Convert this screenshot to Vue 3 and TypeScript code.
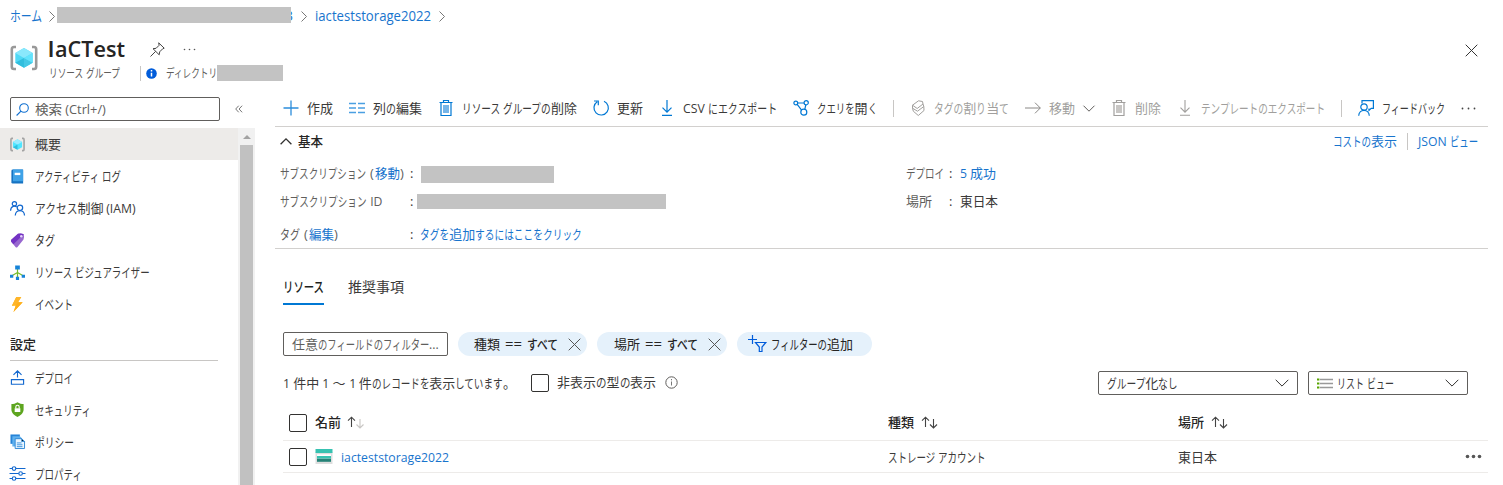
<script setup lang="ts">
import { defineComponent, h, onMounted, ref } from 'vue'

// Label set to a given width: kana are condensed, as in a UI typeface, while kanji keep their full width.
const Txt = defineComponent({
  props: { s: { type: String, required: true }, w: { type: Number, required: true } },
  setup(props) {
    const root = ref<HTMLElement | null>(null)
    const runs = props.s.match(/[\u3040-\u30ff]+|[\u0020-\u007e]+|[^\u0020-\u007e\u3040-\u30ff]+/g) || []
    const sizes = ref<{ w: number; k: number }[]>([])
    const isKana = (t: string) => /[\u3040-\u30ff]/.test(t)
    const isLatin = (t: string) => /^[\u0020-\u007e]+$/.test(t)
    onMounted(() => {
      const els = Array.from(root.value!.querySelectorAll('.txt-in')) as HTMLElement[]
      const nat = els.map((e) => e.getBoundingClientRect().width)
      let kana = 0
      let rest = 0
      runs.forEach((r, i) => {
        if (isKana(r)) kana += nat[i]
        else rest += nat[i] * (isLatin(r) ? 0.94 : 1)
      })
      sizes.value = runs.map((r, i) => {
        const base = isLatin(r) ? 0.94 : 1
        const k = kana === 0 ? (base * props.w) / rest : isKana(r) ? (props.w - rest) / kana : base
        return { w: nat[i] * k, k }
      })
    })
    return () =>
      h('span', { class: 'txt', ref: root, style: { width: props.w + 'px' } },
        runs.map((r, i) => {
          const z = sizes.value[i]
          return h('span', { class: 'txt-run', style: z ? { width: z.w + 'px' } : {} }, [
            h('span', { class: 'txt-in', style: z ? { transform: `scaleX(${z.k})` } : {} }, r),
          ])
        }))
  },
})

const paths: Record<string, string> = {
  plus: '<path d="M8 .5v15M.5 8h15" stroke="#2b8ddb" stroke-width="1.300" fill="none"/>',
  columns: '<path d="M0 3.500h7M0 8h7M0 12.500h7M9 3.500h7M9 8h7M9 12.500h7" stroke="#4a9fe2" stroke-width="1.500"/>',
  trash: '<path d="M1.500 2.500h13M5.500 2.500V.5h5v2M3 2.500v13h10v-13" stroke="#0078d4" stroke-width="1.200" fill="none"/><path d="M5 5h6v8H5z" fill="#76b5e8"/>',
  trashOff: '<path d="M1.500 2.500h13M5.500 2.500V.5h5v2M3 2.500v13h10v-13" stroke="#a19f9d" stroke-width="1.200" fill="none"/><path d="M5 5h6v8H5z" fill="#c8c6c4"/>',
  refresh: '<path d="M11 1.200A7.200 7.200 0 1 1 4.200 1.800M1 1h4.300v4.300" stroke="#0078d4" stroke-width="1.200" fill="none"/>',
  down: '<path d="M8 0v12M3.500 7.700 8 12.200l4.500-4.500M3 15.300h10" stroke="#0078d4" stroke-width="1.200" fill="none"/>',
  downOff: '<path d="M8 0v12M3.500 7.700 8 12.200l4.500-4.500M3 15.300h10" stroke="#a19f9d" stroke-width="1.100" fill="none"/>',
  query: '<g stroke="#0078d4" stroke-width="1.200" fill="none"><circle cx="2.800" cy="3" r="1.900"/><circle cx="13.200" cy="2.700" r="2.100"/><circle cx="10.800" cy="12.200" r="3"/><path d="M4.700 3h6.400M4.200 4.400l4.400 5.700M12.800 4.800l-1 4.500"/></g>',
  tagOff: '<path d="M2.500 5.200 8.500.8l4 .7.500 2.500-5.800 4.500zM2.500 5.200v3l5 3 6.300-4.700L13 4M2.500 8.200l.8 3 5 4.300 5.700-5-.2-4" stroke="#a19f9d" fill="none"/>',
  arrowOff: '<path d="M0 8h15.300M10 2.700 15.300 8 10 13.300" stroke="#8a8886" fill="none"/>',
  feedback: '<g stroke="#0078d4" stroke-width="1.200" fill="none"><path d="M4 3.500V.6h11.400v7.800h-2.200l-2.200 2V8.400"/><circle cx="6" cy="7" r="3.200"/><path d="M.7 15.700c.3-7.200 10.300-7.200 10.600 0"/></g>',
  book: '<path d="M1.500 2Q1.500.6 3 .6h11v14.800H3q-1.500 0-1.500-1.400z" fill="#1673c2"/><path d="M3.200.6H13q1 0 1 1V13H3.200z" fill="#3fa2e7"/><path d="M5 4h6v2.500H5z" fill="#fff"/>',
  people: '<g stroke="#1268cf" stroke-width="1.300" fill="none"><circle cx="4.700" cy="3" r="2.300"/><circle cx="10.600" cy="7.300" r="2.900"/><path d="M.6 10.500c.2-5.500 5-5.700 6.600-4M5.600 15.500c.5-6.800 9.500-6.800 9.900 0"/></g>',
  tag: '<path d="M1.300 7.300 8.500.9q3.200-.9 6.200.4.700 2.700-.3 5.700L7.800 15.200q-.9.700-1.700 0L1.300 9.200q-.6-1 0-1.900z" fill="#9868cf"/><path d="M1.300 7.300 8.500.9q3.200-.9 6.200.4L3.600 12 1.300 9.200q-.6-1 0-1.900z" fill="#7433c4"/><circle cx="12" cy="3.500" r="1.300" fill="#e5d5fa"/>',
  tree: '<path d="M8 4v10M8 8 2 11.500M8 8l6 3.500" stroke="#76bc2d" stroke-width="1.300"/><path d="M5.500.5h5v4.200h-5zM0 10.300h3.500v3.200H0zM12.500 10.300H16v3.200h-3.500zM6.300 12.500h3.400V16H6.300z" fill="#1683d8"/>',
  bolt: '<path d="M6.700 0H12L8.600 5.700h4.900L3.700 16l2.400-6.800H2z" fill="#fdb515"/><path d="M8.600 5.700h4.900L3.700 16l2.400-6.800z" fill="#ffae1b"/><path d="M6.700 0H12L7 8 2 9.200z" fill="#ffb52a"/>',
  deploy: '<g stroke="#1268cf" stroke-width="1.200" fill="none"><path d="M8 8V1M3.700 5.200 8 .9l4.300 4.300M1.500 10.200h13v5h-13z"/></g>',
  shield: '<path d="M8 .3c2 1.500 4.500 1.800 6.500 1.900v6c0 4-4.500 6.600-6.500 7.700-2-1.100-6.500-3.700-6.500-7.700v-6c2-.1 4.500-.4 6.500-1.900z" fill="#5da51f"/><path d="M6.200 7V5.200q0-1.800 1.800-1.800t1.800 1.800V7" stroke="#fff" stroke-width="1.200" fill="none"/><path d="M5 6.700h6v4H5z" fill="#fff"/>',
  policy: '<path d="M.5.500h10v10h-10z" fill="#2583d8"/><path d="M2.500 2.300h8l2 2v9h-10z" fill="#60b1ee"/><path d="M5.500 5h7l3 3v7.500h-10z" fill="#eaf6ff" stroke="#2e86d5"/><path d="M12.500 5v3h3zM7.300 9.500h5M7.300 11.500h6M7.300 13.500h6" stroke="#3a91dc"/>',
  sliders: '<g stroke="#1268cf" stroke-width="1.200" fill="#fff"><path d="M-.5 2.700h17M-.5 8h17M-.5 13.300h17"/><circle cx="4.300" cy="2.700" r="1.900"/><circle cx="11.300" cy="8" r="1.900"/><circle cx="4.300" cy="13.300" r="1.900"/></g>',
  group: '<path d="M3.200 1.500H2Q1 1.500 1 3v10q0 1.500 1 1.500h1.200M12.800 1.500H14q1 0 1 1.500v10q0 1.500-1 1.500h-1.200" stroke="#a3a3a3" stroke-width="1.700" fill="none"/><path d="m8 2.400 4.900 2.800v5.600L8 13.600l-4.900-2.800V5.200z" fill="#50e6ff"/><path d="m8 2.400 4.900 2.800L8 8 3.100 5.200z" fill="#9cebff"/><path d="M8 8v5.600l-4.900-2.800z" fill="#32bedd"/>',
}

interface Entry { icon: string; s: string; w: number }
const nav: Entry[] = [
  { icon: 'group', s: '概要', w: 26 },
  { icon: 'book', s: 'アクティビティ ログ', w: 86 },
  { icon: 'people', s: 'アクセス制御 (IAM)', w: 101 },
  { icon: 'tag', s: 'タグ', w: 20 },
  { icon: 'tree', s: 'リソース ビジュアライザー', w: 115 },
  { icon: 'bolt', s: 'イベント', w: 38 },
]
const settings: Entry[] = [
  { icon: 'deploy', s: 'デプロイ', w: 38 },
  { icon: 'shield', s: 'セキュリティ', w: 56 },
  { icon: 'policy', s: 'ポリシー', w: 39 },
  { icon: 'sliders', s: 'プロパティ', w: 47 },
]
const commands: Entry[] = [
  { icon: 'plus', s: '作成', w: 26 },
  { icon: 'columns', s: '列の編集', w: 49 },
  { icon: 'trash', s: 'リソース グループの削除', w: 115 },
  { icon: 'refresh', s: '更新', w: 26 },
  { icon: 'down', s: 'CSV にエクスポート', w: 94 },
  { icon: 'query', s: 'クエリを開く', w: 60 },
]
</script>

<template>
  <div class="page">
    <nav class="crumbs">
      <Txt class="link" s="ホーム" :w="32" />
      <svg class="sep first" width="6" height="11" viewBox="0 0 6 11"><path d="m.5.500 5 5-5 5" /></svg>
      <span class="mask crumb-mask"></span><span class="link tail">3</span>
      <svg class="sep second" width="6" height="11" viewBox="0 0 6 11"><path d="m.5.500 5 5-5 5" /></svg>
      <Txt class="link" s="iacteststorage2022" :w="116" />
      <svg class="sep third" width="6" height="11" viewBox="0 0 6 11"><path d="m.5.500 5 5-5 5" /></svg>
    </nav>

    <header class="head">
      <svg class="logo" width="28" height="28" viewBox="0 0 28 28">
        <path d="M6 3H4Q1.800 3 1.800 5.200v17.600Q1.800 25 4 25h2M22 3h2q2.200 0 2.200 2.200v17.600Q26.200 25 24 25h-2" fill="none" stroke="#999" stroke-width="2.600" />
        <path d="m14 4 8.700 4.900v9.900L14 23.700l-8.700-4.900V8.900z" fill="#50d9f5" />
        <path d="m14 4 8.700 4.900L14 13.900 5.300 8.900z" fill="#8ae8fc" />
        <path d="M14 13.900v9.800l-8.700-4.900z" fill="#32bedd" />
        <path d="M14 13.900v9.800l8.700-4.900z" fill="#45c8e5" />
        <path d="m14 13.900 8.700-5v9.900z" fill="#63e3fc" />
      </svg>
      <div class="titles">
        <div class="title-row">
          <h1 class="title"><span class="initial">I</span><Txt s="aCTest" :w="70" /></h1>
          <svg class="pin" width="15" height="15" viewBox="0 0 15 15"><path d="m8.700.800 5.500 5.400-1.500.6-3 3-.5 3L3 6.700l3.100-.4 3-3zM5.700 9.300.5 14.500" fill="none" stroke="#444" /></svg>
          <svg class="dots" width="13" height="3" viewBox="0 0 13 3"><g fill="#555"><circle cx="1.500" cy="1.500" r=".8" /><circle cx="6.500" cy="1.500" r=".8" /><circle cx="11.500" cy="1.500" r=".8" /></g></svg>
        </div>
        <div class="sub-row">
          <Txt class="sub" s="リソース グループ" :w="71" />
          <i class="sub-line"></i>
          <svg class="info" width="11" height="11" viewBox="0 0 11 11"><circle cx="5.500" cy="5.500" r="5.300" fill="#015cda" /><path d="M5.500 4.700v3.800M5.500 2v1.500" stroke="#fff" stroke-width="1.500" /></svg>
          <Txt class="sub" s="ディレクトリ" :w="51" />
          <span class="mask sub-mask"></span>
        </div>
      </div>
      <svg class="close" width="13" height="13" viewBox="0 0 13 13"><path d="m.7.700 11.600 11.600M12.300.700.7 12.300" stroke="#333" /></svg>
    </header>

    <div class="body">
      <aside class="side">
        <div class="search-row">
          <div class="search">
            <svg width="13" height="13" viewBox="0 0 13 13"><g fill="none" stroke="#0f6fd0" stroke-width="1.100"><circle cx="8" cy="5" r="4.300" /><path d="M5 8.200.6 12.500" /></g></svg>
            <Txt s="検索 (Ctrl+/)" :w="71" />
          </div>
          <svg class="fold" width="8" height="8" viewBox="0 0 9 9"><path d="M4.200.8.8 4.500l3.400 3.700M8 .8 4.600 4.500 8 8.200" fill="none" stroke="#666" /></svg>
        </div>
        <div class="side-main">
          <div class="menu">
            <div v-for="(n, i) in nav" :key="n.s" class="item" :class="{ on: i === 0 }">
              <svg width="15" height="15" viewBox="0 0 16 16" v-html="paths[n.icon]"></svg><Txt :s="n.s" :w="n.w" />
            </div>
            <div class="group-title"><Txt class="medium" s="設定" :w="26" /></div>
            <div v-for="n in settings" :key="n.s" class="item lower">
              <svg width="15" height="15" viewBox="0 0 16 16" v-html="paths[n.icon]"></svg><Txt :s="n.s" :w="n.w" />
            </div>
          </div>
          <div class="scroll"><i class="up"></i><i class="thumb"></i></div>
        </div>
      </aside>

      <main class="main">
        <div class="toolbar">
          <div v-for="c in commands" :key="c.s" class="cmd">
            <svg width="16" height="16" viewBox="0 0 16 16" v-html="paths[c.icon]"></svg><Txt :s="c.s" :w="c.w" />
          </div>
          <i class="bar"></i>
          <div class="cmd off"><svg width="16" height="16" viewBox="0 0 16 16" v-html="paths.tagOff"></svg><Txt s="タグの割り当て" :w="75" /></div>
          <div class="cmd off"><svg width="16" height="16" viewBox="0 0 16 16" v-html="paths.arrowOff"></svg><Txt s="移動" :w="26" />
            <svg width="12" height="7" viewBox="0 0 12 7"><path d="m.5.700 5.500 5.500L11.500.700" fill="none" stroke="#605e5c" /></svg></div>
          <div class="cmd off"><svg width="16" height="16" viewBox="0 0 16 16" v-html="paths.trashOff"></svg><Txt s="削除" :w="26" /></div>
          <div class="cmd off"><svg width="16" height="16" viewBox="0 0 16 16" v-html="paths.downOff"></svg><Txt s="テンプレートのエクスポート" :w="124" /></div>
          <i class="bar"></i>
          <div class="cmd"><svg width="16" height="16" viewBox="0 0 16 16" v-html="paths.feedback"></svg><Txt s="フィードバック" :w="63" /></div>
          <svg width="15" height="3" viewBox="0 0 15 3"><g fill="#444"><circle cx="1.500" cy="1.500" r=".9" /><circle cx="7.500" cy="1.500" r=".9" /><circle cx="13.500" cy="1.500" r=".9" /></g></svg>
        </div>

        <section class="essentials">
          <div class="ess-head">
            <svg width="12" height="7" viewBox="0 0 12 7"><path d="M.6 6.300 6 .9l5.400 5.400" fill="none" stroke="#323130" stroke-width="1.300" /></svg>
            <Txt class="medium" s="基本" :w="25" />
            <div class="views"><Txt s="コストの表示" :w="64" /><i></i><Txt s="JSON ビュー" :w="60" /></div>
          </div>
          <div class="ess-grid">
            <div class="row r1">
              <span class="key"><Txt s="サブスクリプション" :w="86" /><span class="paren">(</span><Txt class="link" s="移動" :w="25" /><span class="paren">)</span></span>
              <span class="colon">:</span><span class="mask m1"></span>
            </div>
            <div class="row r1"><span class="key"><Txt s="デプロイ" :w="38" /></span><span class="colon">:</span><Txt class="link val" s="5 成功" :w="36" /></div>
            <div class="row r2"><span class="key"><Txt s="サブスクリプション ID" :w="102" /></span><span class="colon">:</span><span class="mask m2"></span></div>
            <div class="row r2"><span class="key"><Txt s="場所" :w="26" /></span><span class="colon">:</span><Txt class="val" s="東日本" :w="38" /></div>
            <div class="row r3">
              <span class="key"><Txt s="タグ" :w="20" /><span class="paren">(</span><Txt class="link" s="編集" :w="25" /><span class="paren">)</span></span>
              <span class="colon">:</span><Txt class="link val" s="タグを追加するにはここをクリック" :w="162" />
            </div>
          </div>
        </section>

        <section class="resources">
          <div class="tabs">
            <div class="tab on"><Txt s="リソース" :w="41" /></div>
            <div class="tab"><Txt s="推奨事項" :w="56" /></div>
          </div>
          <div class="filters">
            <div class="field"><Txt s="任意のフィールドのフィルター..." :w="147" /></div>
            <div class="pill p1"><Txt s="種類" :w="26" /><Txt class="eq" s="==" :w="17" /><Txt class="medium" s="すべて" :w="31" />
              <svg width="13" height="13" viewBox="0 0 13 13"><path d="m.7.700 11.600 11.600M12.300.700.7 12.300" stroke="#555" /></svg></div>
            <div class="pill p2"><Txt s="場所" :w="26" /><Txt class="eq" s="==" :w="17" /><Txt class="medium" s="すべて" :w="31" />
              <svg width="13" height="13" viewBox="0 0 13 13"><path d="m.7.700 11.600 11.600M12.300.700.7 12.300" stroke="#555" /></svg></div>
            <div class="pill p3">
              <svg width="19" height="18" viewBox="0 0 19 18"><path d="M4.500 0v9M0 4.500h9M7.500 7.500h10.300L14 12v4.500h-2.700V12z" fill="none" stroke="#015cda" stroke-width="1.200" /></svg>
              <Txt s="フィルターの追加" :w="82" /></div>
          </div>
          <div class="status">
            <Txt class="count" s="1 件中 1 ～ 1 件のレコードを表示しています。" :w="233" />
            <span class="check"></span>
            <Txt class="hidden-label" s="非表示の型の表示" :w="99" />
            <svg class="hint" width="13" height="13" viewBox="0 0 13 13"><circle cx="6.500" cy="6.500" r="5.700" fill="none" stroke="#605e5c" /><path d="M6.500 5.500v4M6.500 3v1.300" stroke="#777" /></svg>
            <div class="select s1"><Txt s="グループ化なし" :w="71" />
              <svg width="14" height="8" viewBox="0 0 14 8"><path d="m.7.800 6.300 6.300L13.300.8" fill="none" stroke="#323130" /></svg></div>
            <div class="select s2">
              <svg width="16" height="11" viewBox="0 0 16 11"><path d="M3 1.500h13M3 5.500h13M3 9.500h13" stroke="#999" stroke-width="1.400" /><path d="M0 1.500h2.400M0 5.500h2.400M0 9.500h2.400" stroke="#57a300" stroke-width="2.200" /></svg>
              <Txt s="リスト ビュー" :w="57" />
              <svg class="caret" width="14" height="8" viewBox="0 0 14 8"><path d="m.7.800 6.300 6.300L13.300.8" fill="none" stroke="#323130" /></svg></div>
          </div>
          <div class="table">
            <div class="tr th">
              <div class="cell name"><span class="check"></span><Txt class="medium" s="名前" :w="26" />
                <svg width="18" height="13" viewBox="0 0 18 13"><path d="M4.500 11V1.200M1 4.700l3.500-3.500L8 4.700" fill="none" stroke="#444" stroke-width="1.100" /><path d="M13 3v9M9.500 8.500 13 12l3.500-3.500" fill="none" stroke="#c8c6c4" stroke-width="1.100" /></svg></div>
              <div class="cell kind"><Txt class="medium" s="種類" :w="26" />
                <svg width="18" height="13" viewBox="0 0 18 13"><path d="M4.500 11V1.200M1 4.700l3.500-3.500L8 4.700M12.500 3v9M9 8.500l3.500 3.500L16 8.500" fill="none" stroke="#444" stroke-width="1.100" /></svg></div>
              <div class="cell place"><Txt class="medium" s="場所" :w="26" />
                <svg width="18" height="13" viewBox="0 0 18 13"><path d="M4.500 11V1.200M1 4.700l3.500-3.500L8 4.700M12.500 3v9M9 8.500l3.500 3.500L16 8.500" fill="none" stroke="#444" stroke-width="1.100" /></svg></div>
            </div>
            <div class="tr">
              <div class="cell name"><span class="check"></span>
                <svg class="storage" width="18" height="15" viewBox="0 0 18 15"><path d="M.5 3h17v12H.5z" fill="#dedede" /><path d="M.5 0h17v4H.5z" fill="#37c2b1" /><path d="M2 5.300h14v3.500H2z" fill="#fff" /><path d="M2 7h14v2.600H2z" fill="#37c2b1" /><path d="M2 9.800h14v3H2z" fill="#258277" /></svg>
                <Txt class="link" s="iacteststorage2022" :w="108" /></div>
              <div class="cell kind"><Txt s="ストレージ アカウント" :w="98" /></div>
              <div class="cell place"><Txt s="東日本" :w="39" /></div>
              <svg class="more" width="17" height="5" viewBox="0 0 17 5"><g fill="#555"><circle cx="2.500" cy="2.500" r="1.800" /><circle cx="8.500" cy="2.500" r="1.800" /><circle cx="14.500" cy="2.500" r="1.800" /></g></svg>
            </div>
          </div>
        </section>
      </main>
    </div>
  </div>
</template>

<style>
body { overflow: hidden; background: #fff; }
.txt { display: inline-flex; align-items: baseline; flex: none; white-space: pre; line-height: 18px; }
.txt-run { display: block; flex: none; }
.txt-in { display: inline-block; transform-origin: 0 50%; }
</style>

<style scoped>
* { box-sizing: border-box; }
.page { width: 1503px; height: 485px; overflow: hidden; display: flex; flex-direction: column; background: #fff; color: #3b3a39; font: 13px/18px "Open Sans", "Noto Sans CJK JP", sans-serif; }
svg { display: block; flex: none; overflow: visible; }
.link { color: #1874cd; }
.medium { font-weight: 500; color: #252423; }
.mask { background: #c3c3c3; flex: none; }
.crumbs { height: 32px; padding-left: 10px; display: flex; align-items: center; font-size: 14px; flex: none; }
.sep path { fill: none; stroke: #777; }
.first { margin: 0 2px 0 7px; }
.crumb-mask { width: 234px; height: 16px; margin-top: -2px; z-index: 1; }
.tail { width: 8px; margin-left: -6px; font-size: 14px; }
.second { margin: 0 8px 0 8px; }
.third { margin-left: 8px; }
.head { height: 58px; display: flex; flex: none; padding: 0 25px 0 10px; }
.logo { margin-top: 12px; }
.titles { margin-left: 11px; }
.title-row { height: 32px; display: flex; align-items: center; padding-top: 1px; }
.title { display: flex; align-items: baseline; width: 77px; margin: 0; font-size: 22px; line-height: 18px; font-weight: 600; color: #252423; }
.initial { width: 7px; margin-left: -1px; font-family: Inter, "Liberation Sans", sans-serif; }
.pin { margin: 2px 0 0 24px; }
.dots { margin: 2px 0 0 18px; }
.sub-row { height: 18px; display: flex; align-items: center; font-size: 12px; color: #605e5c; }
.sub { padding-top: 1px; }
.sub-line { width: 1px; height: 15px; margin: 0 5px 0 20px; background: #c8c6c4; }
.info { margin-right: 9px; }
.sub-mask { width: 66px; height: 16px; }
.close { margin: 12px 0 0 auto; }
.body { display: flex; flex: 1; min-height: 0; }
.side { width: 255px; display: flex; flex-direction: column; flex: none; }
.search-row { height: 38px; display: flex; padding: 7px 0 0 10px; flex: none; }
.search { width: 210px; height: 24px; border: 1px solid #605e5c; border-radius: 2px; display: flex; align-items: center; gap: 6px; padding-left: 5px; color: #605e5c; }
.fold { margin: 8px 0 0 15px; }
.side-main { display: flex; flex: 1; min-height: 0; }
.menu { width: 238px; }
.item { height: 32px; display: flex; align-items: center; gap: 10px; padding-left: 10px; }
.item.lower { padding-bottom: 1px; }
.item.on { background: #edebe9; }
.group-title { height: 41px; margin: 0 20px 1px 10px; padding-top: 15px; border-bottom: 1px solid #c8c6c4; }
.scroll { width: 17px; background: #f1f1f1; display: flex; flex-direction: column; align-items: center; }
.up { border: 4px solid transparent; border-top: 0; border-bottom: 4px solid #a3a3a3; margin: 7px 0 6px; }
.thumb { width: 13px; flex: 1; background: #c1c1c1; }
.main { margin-left: 20px; width: 1213px; }
.toolbar { height: 37px; display: flex; align-items: center; gap: 16px; padding: 0 0 0 8px; border-bottom: 1px solid #d2d0ce; }
.cmd { display: flex; align-items: center; gap: 8px; }
.off { color: #a19f9d; }
.bar { width: 1px; height: 17px; background: #c8c6c4; }
.essentials { height: 122px; border-bottom: 1px solid #d2d0ce; padding-left: 5px; }
.ess-head { height: 28px; display: flex; align-items: center; gap: 6px; }
.views { margin-left: auto; padding-right: 10px; display: flex; align-items: center; color: #1874cd; }
.views i { width: 1px; height: 17px; margin: 0 10px; background: #c8c6c4; }
.ess-grid { display: grid; grid-template-columns: 626px 1fr; grid-template-rows: 36px 20px 46px; }
.row { display: flex; align-items: center; }
.r1, .r3 { padding-bottom: 1px; }
.key { display: flex; width: 130px; color: #605e5c; }
.row:nth-child(even) .key { width: 43px; }
.paren { width: 5px; margin-left: 4px; text-align: left; }
.link + .paren { margin-left: 0; }
.colon { width: 5px; }
.val { margin-left: 5px; }
.row:nth-child(even) .val { margin-left: 6px; }
.m1 { width: 133px; height: 17px; margin: 3px 0 0 6px; }
.m2 { width: 249px; height: 15px; margin: 1px 0 0 2px; }
.resources { padding-left: 8px; }
.tabs { display: flex; gap: 24px; padding-top: 22px; font-size: 14px; }
.tab { height: 34px; padding-top: 7px; border-bottom: 2px solid transparent; }
.tab.on { border-color: #0078d4; font-weight: 500; color: #201f1e; }
.filters { display: flex; gap: 10px; margin-top: 27px; }
.field { width: 165px; height: 24px; border: 1px solid #605e5c; border-radius: 2px; padding: 2px 0 0 8px; color: #605e5c; }
.pill { height: 24px; border-radius: 12px; background: #e5f1fb; display: flex; align-items: center; color: #252423; }
.p1 { width: 129px; padding-left: 16px; }
.p2 { width: 130px; padding-left: 17px; }
.p3 { width: 135px; padding-left: 11px; gap: 4px; }
.eq { margin: 0 5px; }
.pill .medium + svg { margin-left: 10px; }
.status { height: 49px; display: flex; align-items: center; padding-top: 5px; }
.count { margin-right: 15px; }
.check { width: 18px; height: 18px; border: 1px solid #323130; border-radius: 2px; flex: none; }
.hidden-label { margin: -2px 0 0 8px; }
.hint { margin: -1px 0 0 9px; }
.select { height: 24px; border: 1px solid #605e5c; border-radius: 2px; display: flex; align-items: center; padding: 0 8px; }
.s1 { width: 200px; margin-left: auto; justify-content: space-between; }
.s2 { width: 160px; margin: 0 20px 0 10px; gap: 4px; }
.caret { margin-left: auto; }
.tr { height: 32px; display: flex; align-items: center; border-bottom: 1px solid #edebe9; }
.th { height: 36px; }
.th .txt { margin-top: -2px; }
.cell { display: flex; align-items: center; gap: 8px; }
.name { width: 605px; padding-left: 6px; }
.name svg { margin-left: -2px; }
.name .storage { margin-left: 0; }
.kind { width: 290px; }
.kind svg, .place svg { margin-left: -1px; }
.more { margin: 0 6px 0 auto; }
</style>
